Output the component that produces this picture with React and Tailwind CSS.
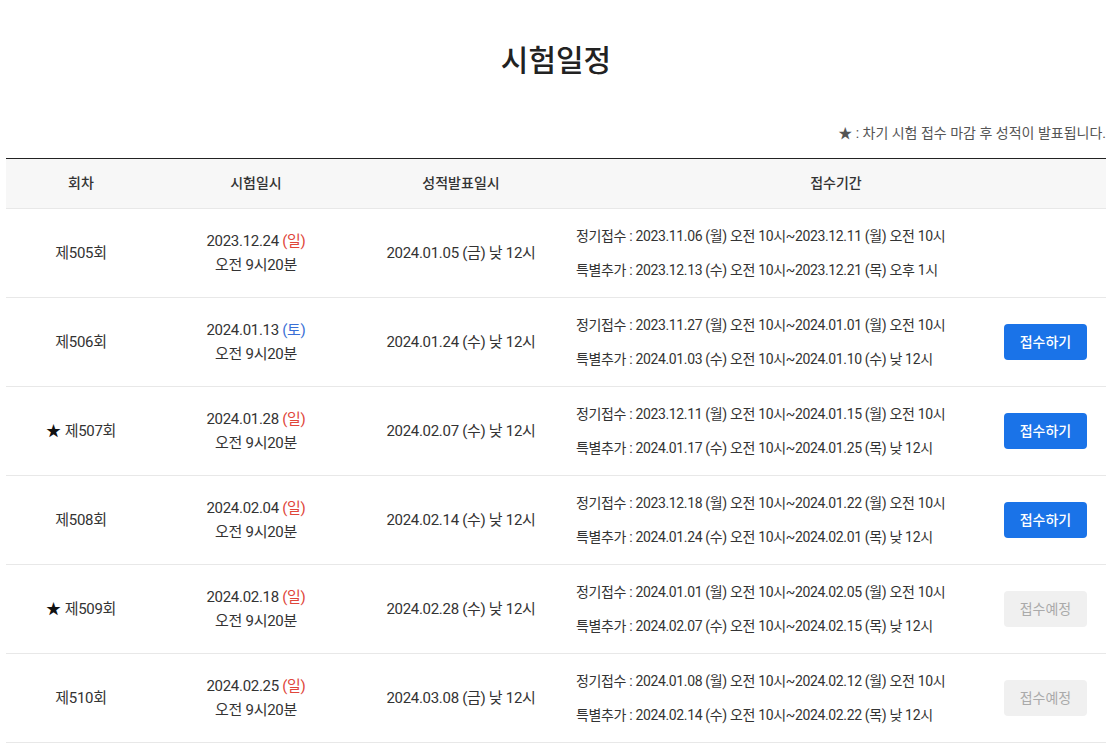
const ROWS = [
  { no: '제505회', star: false, date: '2023.12.24', day: '일', pub: '2024.01.05 (금) 낮 12시',
    reg: '2023.11.06 (월) 오전 10시~2023.12.11 (월) 오전 10시', add: '2023.12.13 (수) 오전 10시~2023.12.21 (목) 오후 1시', btn: null },
  { no: '제506회', star: false, date: '2024.01.13', day: '토', pub: '2024.01.24 (수) 낮 12시',
    reg: '2023.11.27 (월) 오전 10시~2024.01.01 (월) 오전 10시', add: '2024.01.03 (수) 오전 10시~2024.01.10 (수) 낮 12시', btn: 'on' },
  { no: '제507회', star: true, date: '2024.01.28', day: '일', pub: '2024.02.07 (수) 낮 12시',
    reg: '2023.12.11 (월) 오전 10시~2024.01.15 (월) 오전 10시', add: '2024.01.17 (수) 오전 10시~2024.01.25 (목) 낮 12시', btn: 'on' },
  { no: '제508회', star: false, date: '2024.02.04', day: '일', pub: '2024.02.14 (수) 낮 12시',
    reg: '2023.12.18 (월) 오전 10시~2024.01.22 (월) 오전 10시', add: '2024.01.24 (수) 오전 10시~2024.02.01 (목) 낮 12시', btn: 'on' },
  { no: '제509회', star: true, date: '2024.02.18', day: '일', pub: '2024.02.28 (수) 낮 12시',
    reg: '2024.01.01 (월) 오전 10시~2024.02.05 (월) 오전 10시', add: '2024.02.07 (수) 오전 10시~2024.02.15 (목) 낮 12시', btn: 'soon' },
  { no: '제510회', star: false, date: '2024.02.25', day: '일', pub: '2024.03.08 (금) 낮 12시',
    reg: '2024.01.08 (월) 오전 10시~2024.02.12 (월) 오전 10시', add: '2024.02.14 (수) 오전 10시~2024.02.22 (목) 낮 12시', btn: 'soon' },
]

export default function App() {
  return (
    <div className="min-h-screen bg-white text-[#333] font-['Roboto','Noto_Sans_CJK_KR',sans-serif]">
      <div className="pl-[6px] pr-[10px] pt-[34px]">
        <h2 className="text-center text-[30px] font-medium leading-[48px] text-[#222] font-['Noto_Sans_CJK_KR',sans-serif]">시험일정</h2>

        <p className="mt-[41px] text-right text-[14px] leading-[20px] text-[#555]">★ : 차기 시험 접수 마감 후 성적이 발표됩니다.</p>

        <table className="mt-[15px] w-full border-collapse table-fixed border-t border-t-[#222]">
          <colgroup>
            <col className="w-[150px]" />
            <col className="w-[200px]" />
            <col className="w-[210px]" />
            <col />
            <col className="w-[121px]" />
          </colgroup>
          <thead>
            <tr className="h-[50px] bg-[#f7f7f7] border-b border-[#e8e8e8]">
              <th className="text-[14px] font-medium text-[#333]">회차</th>
              <th className="text-[14px] font-medium text-[#333]">시험일시</th>
              <th className="text-[14px] font-medium text-[#333]">성적발표일시</th>
              <th colSpan={2} className="text-[14px] font-medium text-[#333]">접수기간</th>
            </tr>
          </thead>
          <tbody>
            {ROWS.map((r) => (
              <tr key={r.no} className="h-[89px] border-b border-[#e8e8e8] text-[15px] tracking-[-0.3px]">
                <td className="text-center">
                  {r.star && <span className="mr-[4px] text-[#111]">★</span>}
                  {r.no}
                </td>
                <td className="text-center leading-[24px]">
                  <div>
                    {r.date}{' '}
                    <span className={r.day === '토' ? 'text-[#3a6fd6]' : 'text-[#e0463a]'}>({r.day})</span>
                  </div>
                  <div>오전 9시20분</div>
                </td>
                <td className="text-center">{r.pub}</td>
                <td className="pl-[10px] text-[14px] tracking-[-0.35px] leading-[20px]">
                  <div>정기접수 : {r.reg}</div>
                  <div className="mt-[14px]">특별추가 : {r.add}</div>
                </td>
                <td className="text-center tracking-normal">
                  {r.btn === 'on' && (
                    <button className="w-[83px] h-[36px] rounded-[4px] bg-[#1a73e8] text-white text-[14px] font-medium">접수하기</button>
                  )}
                  {r.btn === 'soon' && (
                    <button className="w-[83px] h-[36px] rounded-[4px] bg-[#f0f0f0] text-[#aaa] text-[14px]">접수예정</button>
                  )}
                </td>
              </tr>
            ))}
          </tbody>
        </table>
      </div>
    </div>
  )
}
